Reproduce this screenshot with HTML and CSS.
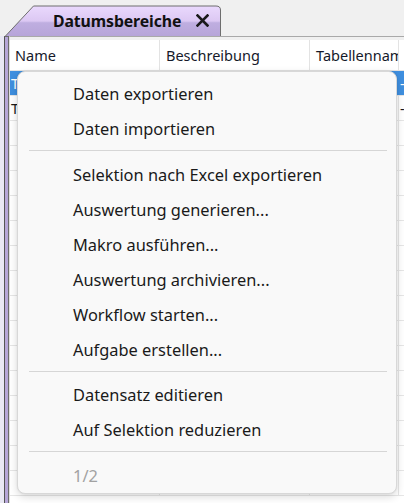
FILE: index.html
```html
<!DOCTYPE html>
<html lang="de">
<head>
<meta charset="utf-8">
<title>Datumsbereiche</title>
<link rel="stylesheet" href="styles.css">
</head>
<body>
<div class="window">
  <div class="tabstrip">
    <div class="tab">
      <svg class="tab-shape" width="216" height="31" viewBox="0 0 216 31">
        <defs>
          <linearGradient id="tabfill" x1="0" y1="0" x2="0" y2="1">
            <stop offset="0" stop-color="#ead9fd"/>
            <stop offset="0.5" stop-color="#dcc8f3"/>
            <stop offset="0.56" stop-color="#bfaee0"/>
            <stop offset="1" stop-color="#b7a5d9"/>
          </linearGradient>
        </defs>
        <path d="M0.5 31 L28.5 1 L211 1 Q215.5 1 215.5 5 L215.5 31" fill="url(#tabfill)" stroke="#6e6e6e" stroke-width="1"/>
      </svg>
      <span class="tab-title">Datumsbereiche</span>
      <svg class="tab-close" width="13" height="13" viewBox="0 0 13 13">
        <path d="M1.5 1.5 L11.5 11.5 M11.5 1.5 L1.5 11.5" stroke="#1a1a1a" stroke-width="2.6" stroke-linecap="square"/>
      </svg>
    </div>
  </div>

  <div class="panel">
    <div class="frame"></div>
    <div class="grid">
      <div class="gap"></div>
      <div class="row head">
        <div class="cell c1">Name</div>
        <div class="cell c2">Beschreibung</div>
        <div class="cell c3">Tabellenname</div>
        <div class="cell c4"></div>
      </div>
      <div class="row sel">
        <div class="cell c1">Tag</div>
        <div class="cell c2"></div>
        <div class="cell c3"></div>
        <div class="cell c4">-</div>
      </div>
      <div class="row">
        <div class="cell c1">Tag</div>
        <div class="cell c2"></div>
        <div class="cell c3"></div>
        <div class="cell c4">-</div>
      </div>
      <div class="row"><div class="cell c1"></div><div class="cell c2"></div><div class="cell c3"></div><div class="cell c4"></div></div>
      <div class="row"><div class="cell c1"></div><div class="cell c2"></div><div class="cell c3"></div><div class="cell c4"></div></div>
      <div class="row"><div class="cell c1"></div><div class="cell c2"></div><div class="cell c3"></div><div class="cell c4"></div></div>
      <div class="row"><div class="cell c1"></div><div class="cell c2"></div><div class="cell c3"></div><div class="cell c4"></div></div>
      <div class="row"><div class="cell c1"></div><div class="cell c2"></div><div class="cell c3"></div><div class="cell c4"></div></div>
      <div class="row"><div class="cell c1"></div><div class="cell c2"></div><div class="cell c3"></div><div class="cell c4"></div></div>
      <div class="row"><div class="cell c1"></div><div class="cell c2"></div><div class="cell c3"></div><div class="cell c4"></div></div>
      <div class="row"><div class="cell c1"></div><div class="cell c2"></div><div class="cell c3"></div><div class="cell c4"></div></div>
      <div class="row"><div class="cell c1"></div><div class="cell c2"></div><div class="cell c3"></div><div class="cell c4"></div></div>
      <div class="row"><div class="cell c1"></div><div class="cell c2"></div><div class="cell c3"></div><div class="cell c4"></div></div>
      <div class="row"><div class="cell c1"></div><div class="cell c2"></div><div class="cell c3"></div><div class="cell c4"></div></div>
      <div class="row"><div class="cell c1"></div><div class="cell c2"></div><div class="cell c3"></div><div class="cell c4"></div></div>
      <div class="row"><div class="cell c1"></div><div class="cell c2"></div><div class="cell c3"></div><div class="cell c4"></div></div>
      <div class="row"><div class="cell c1"></div><div class="cell c2"></div><div class="cell c3"></div><div class="cell c4"></div></div>
      <div class="row"><div class="cell c1"></div><div class="cell c2"></div><div class="cell c3"></div><div class="cell c4"></div></div>
    </div>
  </div>

  <ul class="menu">
    <li class="item">Daten exportieren</li>
    <li class="item">Daten importieren</li>
    <li class="sep"></li>
    <li class="item">Selektion nach Excel exportieren</li>
    <li class="item">Auswertung generieren...</li>
    <li class="item">Makro ausführen...</li>
    <li class="item">Auswertung archivieren...</li>
    <li class="item">Workflow starten...</li>
    <li class="item">Aufgabe erstellen...</li>
    <li class="sep"></li>
    <li class="item">Datensatz editieren</li>
    <li class="item">Auf Selektion reduzieren</li>
    <li class="sep"></li>
    <li class="item disabled">1/2</li>
  </ul>
</div>
</body>
</html>
```

FILE: styles.css
```css
* { box-sizing: border-box; }

html, body {
  margin: 0;
  padding: 0;
  background: #f0f0f0;
  font-family: "Noto Sans", "Open Sans", sans-serif;
  color: #1b1b1b;
}

.window {
  position: relative;
  width: 404px;
  height: 503px;
  overflow: hidden;
  display: flex;
  flex-direction: column;
}

/* tab strip */
.tabstrip {
  height: 36px;
  padding: 5px 0 0 5px;
  display: flex;
  align-items: flex-end;
  flex: none;
}

.tab {
  position: relative;
  width: 216px;
  height: 31px;
  display: flex;
  align-items: center;
  padding-left: 48px;
  gap: 15px;
}

.tab-shape {
  position: absolute;
  left: 0;
  top: 0;
  z-index: 0;
}

.tab-title,
.tab-close {
  position: relative;
  z-index: 1;
}

.tab-title {
  font-weight: 700;
  font-size: 15.8px;
  color: #111;
  letter-spacing: -0.1px;
  padding-top: 1px;
}

/* panel with purple frame on the left */
.panel {
  flex: 1;
  display: flex;
  background: #e9e8f4;
  padding-left: 4px;
}

.frame {
  width: 5px;
  flex: none;
  background: #b6a6d8;
  border-left: 1px solid #555;
  border-right: 1px solid #6c6c6c;
  border-top: 1px solid #6c6c6c;
}

.grid {
  flex: 1;
  background: #fff;
  border-top: 1px solid #a9a9a9;
  border-left: 1px solid #dedede;
  overflow: hidden;
}

.gap {
  height: 3px;
  background: #f0f0f0;
}

.row {
  display: flex;
  height: 25px;
  border-bottom: 1px solid #e6e6e6;
  font-size: 14.5px;
}

.row.head {
  height: 31px;
  border-bottom: 1px solid #e3e3e3;
}

.cell {
  flex: none;
  display: flex;
  align-items: center;
  border-right: 1px solid #e6e6e6;
  white-space: nowrap;
  overflow: hidden;
  padding-left: 1px;
}

.c1 { width: 150px; }
.c2 { width: 150px; }
.c3 { width: 89px; }
.c4 { width: 40px; border-right: none; padding-left: 1px; }

.head .cell { border-right-color: #e3e3e3; color: #15192a; padding-left: 6px; }
.head .c1 { padding-left: 5px; }

.row.sel {
  background: #3f8fdf;
  color: #fff;
}
.row.sel .cell { border-right-color: transparent; }

/* context menu floating over the grid */
.menu {
  position: absolute;
  left: 17px;
  top: 71px;
  width: 380px;
  margin: 0;
  padding: 4px 0 0;
  list-style: none;
  background: #f9f9f9;
  border: 1px solid #d8d8d8;
  border-radius: 8px;
  box-shadow: 0 3px 8px rgba(0, 0, 0, 0.14), 0 0 2px rgba(0, 0, 0, 0.08);
  font-size: 16.4px;
}

.item {
  height: 35px;
  line-height: 35px;
  padding-left: 55px;
  white-space: nowrap;
  color: #1a1a1a;
}

.item.disabled { color: #a2a2a2; }

.sep {
  height: 10.5px;
  padding-top: 4px;
  margin: 0 9px 0 11px;
}
.sep::before {
  content: "";
  display: block;
  height: 1px;
  background: #d6d6d6;
}
```
